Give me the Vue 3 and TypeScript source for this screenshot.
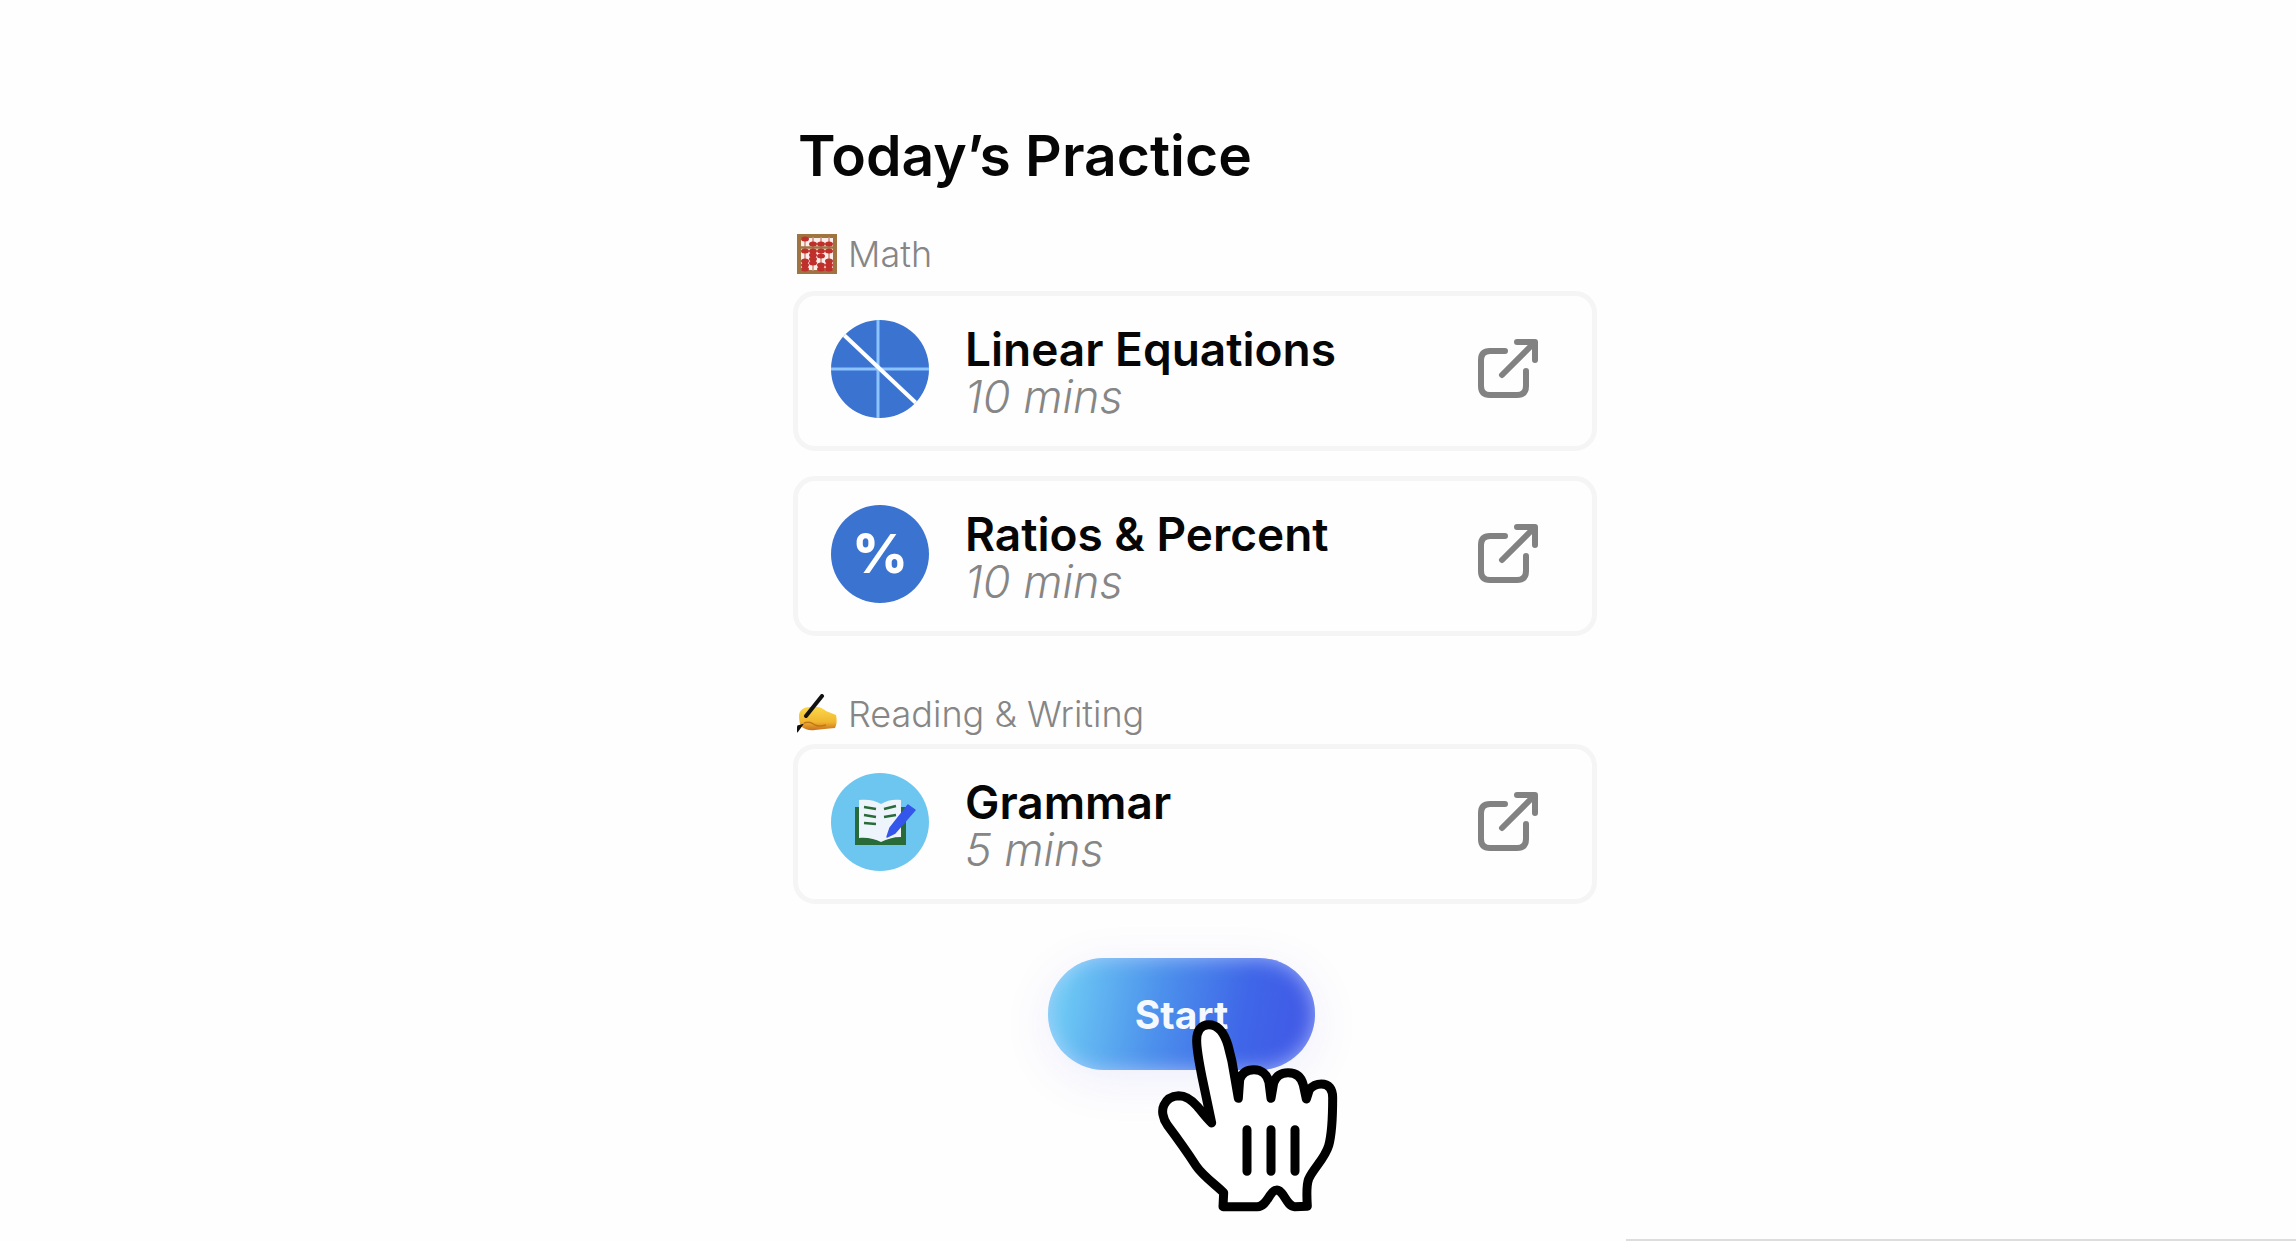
<script setup lang="ts">
type IconName = 'linear' | 'percent' | 'grammar'

interface Task {
  title: string
  duration: string
  icon: IconName
}

interface Section {
  id: string
  label: string
  tasks: Task[]
}

const sections: Section[] = [
  {
    id: 'math',
    label: 'Math',
    tasks: [
      { title: 'Linear Equations', duration: '10 mins', icon: 'linear' },
      { title: 'Ratios & Percent', duration: '10 mins', icon: 'percent' },
    ],
  },
  {
    id: 'writing',
    label: 'Reading & Writing',
    tasks: [{ title: 'Grammar', duration: '5 mins', icon: 'grammar' }],
  },
]

// Bead positions on the abacus, as [column x, row y] pairs
const beads: [number, number][] = [
  [8, 5], [16, 10], [24, 10], [32, 10],
  [8, 17], [16, 17], [24, 17], [32, 17],
  [16, 21], [24, 22], [16, 25], [8, 27], [32, 27],
  [16, 29], [8, 31], [32, 31], [24, 31], [8, 35], [24, 35], [32, 35],
]
</script>

<template>
  <div class="page">
    <main class="practice">
      <h1 class="heading">Today’s Practice</h1>

      <section v-for="section in sections" :key="section.id" class="section" :class="section.id">
        <h2 class="label">
          <svg v-if="section.id === 'math'" class="emoji" viewBox="0 0 40 40" aria-hidden="true">
            <rect x="2" y="2" width="36" height="36" fill="#fbeeea" stroke="#a07440" stroke-width="4" />
            <path d="M8 3v34M16 3v34M24 3v34M32 3v34" stroke="#d08a7c" stroke-width="1.500" />
            <path d="M2 13.500h36" stroke="#a07440" stroke-width="2.500" />
            <ellipse v-for="([x, y], i) in beads" :key="i" :cx="x" :cy="y" rx="4" ry="2.500" fill="#bf2f2c" />
          </svg>
          <svg v-else class="emoji" viewBox="0 0 40 40" aria-hidden="true">
            <defs>
              <linearGradient id="skin" x1="0" y1="0" x2="0" y2="1">
                <stop offset="0" stop-color="#fbd84a" />
                <stop offset="0.650" stop-color="#f0b62e" />
                <stop offset="1" stop-color="#c96f1c" />
              </linearGradient>
            </defs>
            <path d="M2 22C2 16 7 13 13 13C20 12 25 13 29 17L39 21C40 26 40 30 38 34C30 35 24 35 18 36C12 37 8 35 5 33C3 31 2 27 2 22Z" fill="url(#skin)" />
            <path d="M7 29C12 27 15 29 18 31C22 33 26 32 29 31" fill="none" stroke="#c4761d" stroke-width="1.500" />
            <path d="M9 22L25 2" stroke="#111" stroke-width="4" stroke-linecap="round" />
            <path d="M5 31L0 38L1 32Z" fill="#111" stroke="#111" stroke-width="1.500" />
          </svg>
          <span>{{ section.label }}</span>
        </h2>

        <div class="cards">
          <article v-for="task in section.tasks" :key="task.title" class="card">
            <div class="badge" :class="task.icon">
              <svg v-if="task.icon === 'linear'" viewBox="0 0 98 98" aria-hidden="true">
                <path d="M47 0v98M0 49h98" stroke="#8cc4ff" stroke-width="3" />
                <path d="M13 15L85 83" stroke="#fff" stroke-width="4" />
              </svg>
              <span v-else-if="task.icon === 'percent'">%</span>
              <svg v-else viewBox="0 0 98 98" aria-hidden="true">
                <path d="M24 34h51v38H24z" fill="#286b38" />
                <path d="M28 27C36 26 44 27 50 31C56 27 63 26 70 27V64C62 64 56 66 50 69C44 66 36 64 28 65Z" fill="#eef4fb" />
                <path d="M33 34L45 36M33 42L45 44M33 50L45 51M53 36L65 33M53 44L65 42" stroke="#286b38" stroke-width="2.500" />
                <path d="M77 32L84 37L64 60L56 64L59 55Z" fill="#3556ea" stroke="#3556ea" stroke-width="1.500" stroke-linejoin="round" />
              </svg>
            </div>
            <div class="text">
              <h3 class="title">{{ task.title }}</h3>
              <p class="duration">{{ task.duration }}</p>
            </div>
            <a class="open" href="#" :aria-label="`Open ${task.title}`">
              <svg viewBox="0 0 60 60" aria-hidden="true">
                <path d="M27 12H12Q3 12 3 21V47Q3 56 12 56H39Q48 56 48 47V32M24 36L56 4M39 3H57V21" />
              </svg>
            </a>
          </article>
        </div>
      </section>

      <div class="action">
        <button class="start" type="button">Start</button>
        <svg class="hand" viewBox="460 290 564 594" aria-hidden="true">
          <path
            class="outline"
            d="M633 608L604 470C594 420 588 385 588 360C588 330 602 313 624 313C652 313 670 335 682 375C692 410 698 440 702 470L713 534L717 478C724 456 740 448 760 448C782 448 800 462 805 486L811 534L819 488C826 466 840 457 862 457C886 457 902 468 908 494L917 536L926 508C936 496 948 491 962 491C984 491 996 505 996 532C996 590 994 640 984 676C972 716 938 744 924 776C916 796 918 826 920 858L882 859C866 858 858 840 848 825C840 813 834 809 829 809C823 809 815 814 808 825C798 840 790 858 770 859L667 859L669 817C646 794 606 766 586 736C556 690 524 646 500 614C486 594 482 570 490 554C498 536 514 527 534 526C556 526 572 537 590 558C606 578 618 594 633 608Z"
          />
          <path class="creases" d="M739 628V753M811 628V753M883 628V753" />
        </svg>
      </div>
    </main>
    <hr class="rule" />
  </div>
</template>

<style>
body {
  margin: 0;
  background: #fefefe;
}
</style>

<style scoped>
.page {
  display: flex;
  flex-direction: column;
  justify-content: space-between;
  min-height: 100vh;
  font-family: Inter, "Liberation Sans", sans-serif;
  color: #060606;
}

.practice {
  display: grid;
  grid-template-columns: minmax(0, 804px);
  margin-left: calc(50% - 355px);
  padding-top: 124px;
}

h1,
h2,
h3,
p {
  margin: 0;
}

.heading {
  padding-left: 5px;
  font-size: 57px;
  line-height: 64px;
  font-weight: 600;
}

.section {
  margin-top: 42px;
}

.section.writing {
  margin-top: 54px;
}

.label {
  display: flex;
  align-items: center;
  gap: 11px;
  padding-left: 4px;
  margin-bottom: 13px;
  font-size: 36px;
  line-height: 48px;
  font-weight: 300;
  color: #868686;
}

.writing .label {
  margin-bottom: 6px;
}

.emoji {
  width: 40px;
  height: 40px;
}

.cards {
  display: grid;
  gap: 25px;
}

.card {
  display: flex;
  align-items: center;
  box-sizing: border-box;
  height: 160px;
  padding: 0 54px 5px 33px;
  border: 5px solid #f5f5f5;
  border-radius: 22px;
}

.badge {
  display: grid;
  place-items: center;
  width: 98px;
  height: 98px;
  flex: none;
  overflow: hidden;
  border-radius: 50%;
  background: #3b73d0;
  color: #fff;
  font-size: 54px;
  font-weight: 800;
}

.badge svg {
  width: 98px;
  height: 98px;
}

.badge.grammar {
  background: #6cc6f0;
}

.text {
  flex: 1;
  padding: 8px 0 0 36px;
}

.title {
  font-size: 46px;
  line-height: 48px;
  font-weight: 600;
}

.duration {
  font-size: 45px;
  line-height: 48px;
  font-weight: 300;
  font-style: italic;
  color: #868686;
}

.open,
.open svg {
  display: block;
  width: 60px;
  height: 60px;
}

.open path {
  fill: none;
  stroke: #828282;
  stroke-width: 6;
  stroke-linecap: round;
  stroke-linejoin: round;
}

.action {
  position: relative;
  justify-self: start;
  margin: 54px 0 0 255px;
}

.start {
  display: block;
  width: 267px;
  height: 112px;
  padding: 0;
  border: 0;
  border-radius: 56px;
  background: linear-gradient(100deg, #6cc8f4 8%, #4c90ec 42%, #3f66e8 72%, #4156e6 100%);
  box-shadow:
    inset 0 0 20px rgba(200, 215, 255, 0.7),
    0 10px 48px rgba(90, 90, 240, 0.1);
  color: #f4f8ff;
  font-family: inherit;
  font-size: 39px;
  font-weight: 700;
}

.hand {
  position: absolute;
  left: 106px;
  top: 59px;
  width: 188px;
  height: 198px;
  pointer-events: none;
}

.outline {
  fill: #fff;
  stroke: #000;
  stroke-width: 27;
  stroke-linejoin: round;
}

.creases {
  stroke: #000;
  stroke-width: 27;
  stroke-linecap: round;
}

.rule {
  width: calc(50% - 478px);
  height: 2px;
  margin: 0 0 0 auto;
  border: 0;
  background: #dcdede;
}
</style>
